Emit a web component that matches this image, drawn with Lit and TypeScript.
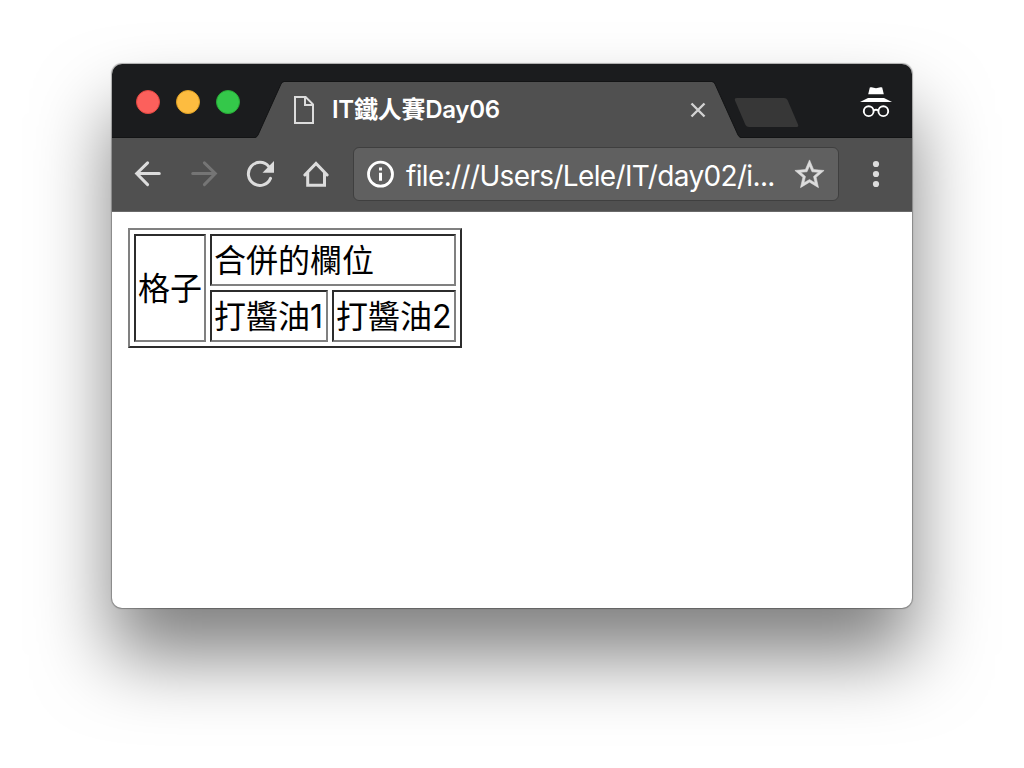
import { LitElement, html, css, svg } from 'lit';
import { customElement, property } from 'lit/decorators.js';

const icons = {
  back: svg`<path d="M27.3 15.5H4.8M15.6 4.9L4.7 15.5l10.9 11.1" />`,
  forward: svg`<path d="M4.7 15.5h22.5M16.4 4.9l10.9 10.6-10.9 11.1" />`,
  reload: svg`
    <path d="M26.5 20.3A11.5 11.5 0 1 1 24.8 8.6" />
    <path class="solid" d="M30 3v11.7H18.5z" />
  `,
  home: svg`<path d="M4.8 17L16 5.4 27.2 17M7.7 14.5v12.8h16.8V14.5" />`,
  menu: svg`
    <circle class="solid" cx="16" cy="6" r="3.1" />
    <circle class="solid" cx="16" cy="16" r="3.1" />
    <circle class="solid" cx="16" cy="26" r="3.1" />
  `,
};

/**
 * Single 32px toolbar button
 */
@customElement('toolbar-icon')
export class ToolbarIcon extends LitElement {
  @property({ type: String }) name: keyof typeof icons = 'back';
  @property({ type: Boolean, reflect: true }) disabled = false;

  static styles = css`
    :host {
      display: block;
      flex: none;
      width: 32px;
      height: 32px;
      color: #dcdcdc;
    }

    :host([disabled]) {
      color: #757575;
    }

    svg {
      display: block;
      fill: none;
      stroke: currentColor;
      stroke-width: 3;
      stroke-linecap: round;
    }

    .solid {
      fill: currentColor;
      stroke: none;
    }
  `;

  render() {
    return html`<svg width="32" height="32" viewBox="0 0 32 32">${icons[this.name]}</svg>`;
  }
}

/**
 * Title bar with window controls, the open tab and the incognito badge
 */
@customElement('tab-strip')
export class TabStrip extends LitElement {
  @property({ type: String }) label = '';

  static styles = css`
    :host {
      display: flex;
      height: 74px;
      box-sizing: border-box;
      padding: 0 20px 0 24px;
      background: #1b1c1e;
      border-bottom: 1px solid #131415;
    }

    .lights {
      display: flex;
      gap: 16px;
      padding-top: 26px;
    }

    .light {
      box-sizing: border-box;
      width: 24px;
      height: 24px;
      border-radius: 50%;
    }

    .close {
      background: #fc605c;
      border: 1px solid #e2463f;
    }

    .minimize {
      background: #fdbc40;
      border: 1px solid #dfa023;
    }

    .zoom {
      background: #34c84a;
      border: 1px solid #27aa35;
    }

    .tab {
      position: relative;
      display: flex;
      width: 486px;
      height: 57px;
      margin: 17px 0 0 15px;
    }

    .shape {
      position: absolute;
      inset: 0;
    }

    .page {
      position: relative;
      margin: 15px 0 0 39px;
    }

    .label {
      position: relative;
      flex: 1;
      margin: 13px 0 0 18px;
      font: 600 24px/32px Inter, 'Noto Sans CJK TC', sans-serif;
      letter-spacing: -0.27px;
      color: #fff;
      white-space: nowrap;
    }

    .dismiss {
      position: relative;
      margin: 21px 35px 0 0;
    }

    .new-tab {
      margin: 34px auto 0 -7px;
    }

    .incognito {
      margin-top: 22px;
    }
  `;

  render() {
    return html`
      <div class="lights">
        <div class="light close"></div>
        <div class="light minimize"></div>
        <div class="light zoom"></div>
      </div>
      <div class="tab">
        <svg class="shape" width="486" height="57" viewBox="0 0 486 57">
          <path fill="#505050" d="M0 57Q2 56.500 3 54L26 3Q27 1 29 1H457Q459 1 460 3L483 54Q484 56.500 486 57z" />
          <path fill="none" stroke="#131415" d="M0 56.500Q2 56 3 54L26 3Q27 .5 29 .5H457Q459 .5 460 3L483 54Q484 56 486 56.500" />
        </svg>
        <svg class="page" width="20" height="28" viewBox="0 0 20 28" fill="none" stroke="#dcdcdc" stroke-width="2">
          <path d="M1 1h10.600L19 8.400V27H1zM11 1v8h8" />
        </svg>
        <div class="label">${this.label}</div>
        <svg class="dismiss" width="16" height="16" viewBox="0 0 16 16" stroke="#d2d2d2" stroke-width="2.400">
          <path d="M1.500 1.500l13 13M14.500 1.500l-13 13" />
        </svg>
      </div>
      <svg class="new-tab" width="66" height="30" viewBox="0 0 66 30">
        <path fill="#373737" d="M3 0H50Q52.500 0 53.500 2L64 26.500Q65 29 62.500 29H15Q12.500 29 11.500 27L1 2.500Q0 0 3 0z" />
      </svg>
      <svg class="incognito" width="32" height="34" viewBox="0 0 32 34" fill="#fff">
        <path d="M9.800 1.600Q10.500.9 11.500 1.300L16 2.200l4.500-.9Q21.500.9 22.200 1.600L23.800 8.200H8.200z" />
        <path d="M8 12h16l8 4H0z" />
        <g fill="none" stroke="#fff" stroke-width="1.900">
          <circle cx="8.700" cy="25.200" r="4.900" />
          <circle cx="23.300" cy="25.200" r="4.900" />
          <path d="M13.500 24.500Q16 23 18.500 24.500" />
        </g>
      </svg>
    `;
  }
}

/**
 * Navigation buttons and address field
 */
@customElement('nav-bar')
export class NavBar extends LitElement {
  @property({ type: String }) url = '';

  static styles = css`
    :host {
      display: flex;
      align-items: flex-start;
      gap: 24px;
      box-sizing: border-box;
      height: 74px;
      padding: 20px 20px 0;
      background: #505050;
      border-bottom: 1px solid #696969;
    }

    .address {
      display: flex;
      flex: 1;
      box-sizing: border-box;
      height: 54px;
      margin: -11px -3px 0;
      padding-left: 13px;
      background: #606060;
      border: 1px solid #3f3f3f;
      border-radius: 6px;
    }

    .info {
      margin-top: 12px;
    }

    .url {
      flex: 1;
      margin: 10px 0 0 11px;
      font: 400 28px/36px Inter, 'Noto Sans CJK TC', sans-serif;
      letter-spacing: -0.65px;
      color: #fff;
      white-space: nowrap;
    }

    .star {
      margin: 9px 11px 0 0;
    }
  `;

  render() {
    return html`
      <toolbar-icon name="back"></toolbar-icon>
      <toolbar-icon name="forward" disabled></toolbar-icon>
      <toolbar-icon name="reload"></toolbar-icon>
      <toolbar-icon name="home"></toolbar-icon>
      <div class="address">
        <svg class="info" width="28" height="28" viewBox="0 0 28 28" fill="#fff">
          <circle cx="13.500" cy="14.200" r="12" fill="none" stroke="#fff" stroke-width="2.800" />
          <path d="M12 7.500h3v3h-3zM12 12.800h3v8h-3z" />
        </svg>
        <div class="url">${this.url}</div>
        <svg class="star" width="35" height="35" viewBox="0 0 24 24" fill="#dcdcdc" stroke="#dcdcdc" stroke-width=".4">
          <path d="M22 9.240l-7.190-.62L12 2 9.190 8.630 2 9.240l5.460 4.730L5.820 21 12 17.270 18.180 21l-1.630-7.030L22 9.240zM12 15.400l-3.760 2.270 1-4.280-3.320-2.880 4.380-.38L12 6.100l1.710 4.040 4.380.38-3.320 2.880 1 4.280L12 15.400z" />
        </svg>
      </div>
      <toolbar-icon name="menu"></toolbar-icon>
    `;
  }
}

@customElement('app-root')
export class AppRoot extends LitElement {
  static styles = css`
    :host {
      display: block;
      box-sizing: border-box;
      width: 1024px;
      height: 768px;
      padding: 64px 112px;
      background: #fff;
      overflow: hidden;
    }

    .window {
      height: 544px;
      border-radius: 10px;
      background: #fff;
      box-shadow: 0 0 1px 1px rgba(0, 0, 0, 0.3), 0 48px 76px rgba(0, 0, 0, 0.5);
    }

    .chrome {
      overflow: hidden;
      border-radius: 10px 10px 0 0;
    }

    .content {
      padding: 16px;
    }

    table {
      table-layout: fixed;
      width: 334px;
      border: 2px solid;
      border-color: #808080 #2c2c2c #2c2c2c #808080;
      border-spacing: 4px;
      font: 32px/44px Inter, 'Noto Sans CJK TC', sans-serif;
      color: #000;
    }

    td {
      height: 42px;
      padding: 4px 2px 2px;
      line-height: 42px;
      border: 2px solid;
      border-color: #2c2c2c #808080 #808080 #2c2c2c;
      white-space: nowrap;
    }

    .first {
      width: 72px;
    }

    .second {
      width: 118px;
    }

    .third {
      width: 124px;
    }
  `;

  render() {
    return html`
      <div class="window">
        <div class="chrome">
          <tab-strip label="IT鐵人賽Day06"></tab-strip>
          <nav-bar url="file:///Users/Lele/IT/day02/i..."></nav-bar>
        </div>
        <div class="content">
          <table>
            <colgroup>
              <col class="first" />
              <col class="second" />
              <col class="third" />
            </colgroup>
            <tr>
              <td rowspan="2">格子</td>
              <td colspan="2">合併的欄位</td>
            </tr>
            <tr>
              <td>打醬油1</td>
              <td>打醬油2</td>
            </tr>
          </table>
        </div>
      </div>
    `;
  }
}
